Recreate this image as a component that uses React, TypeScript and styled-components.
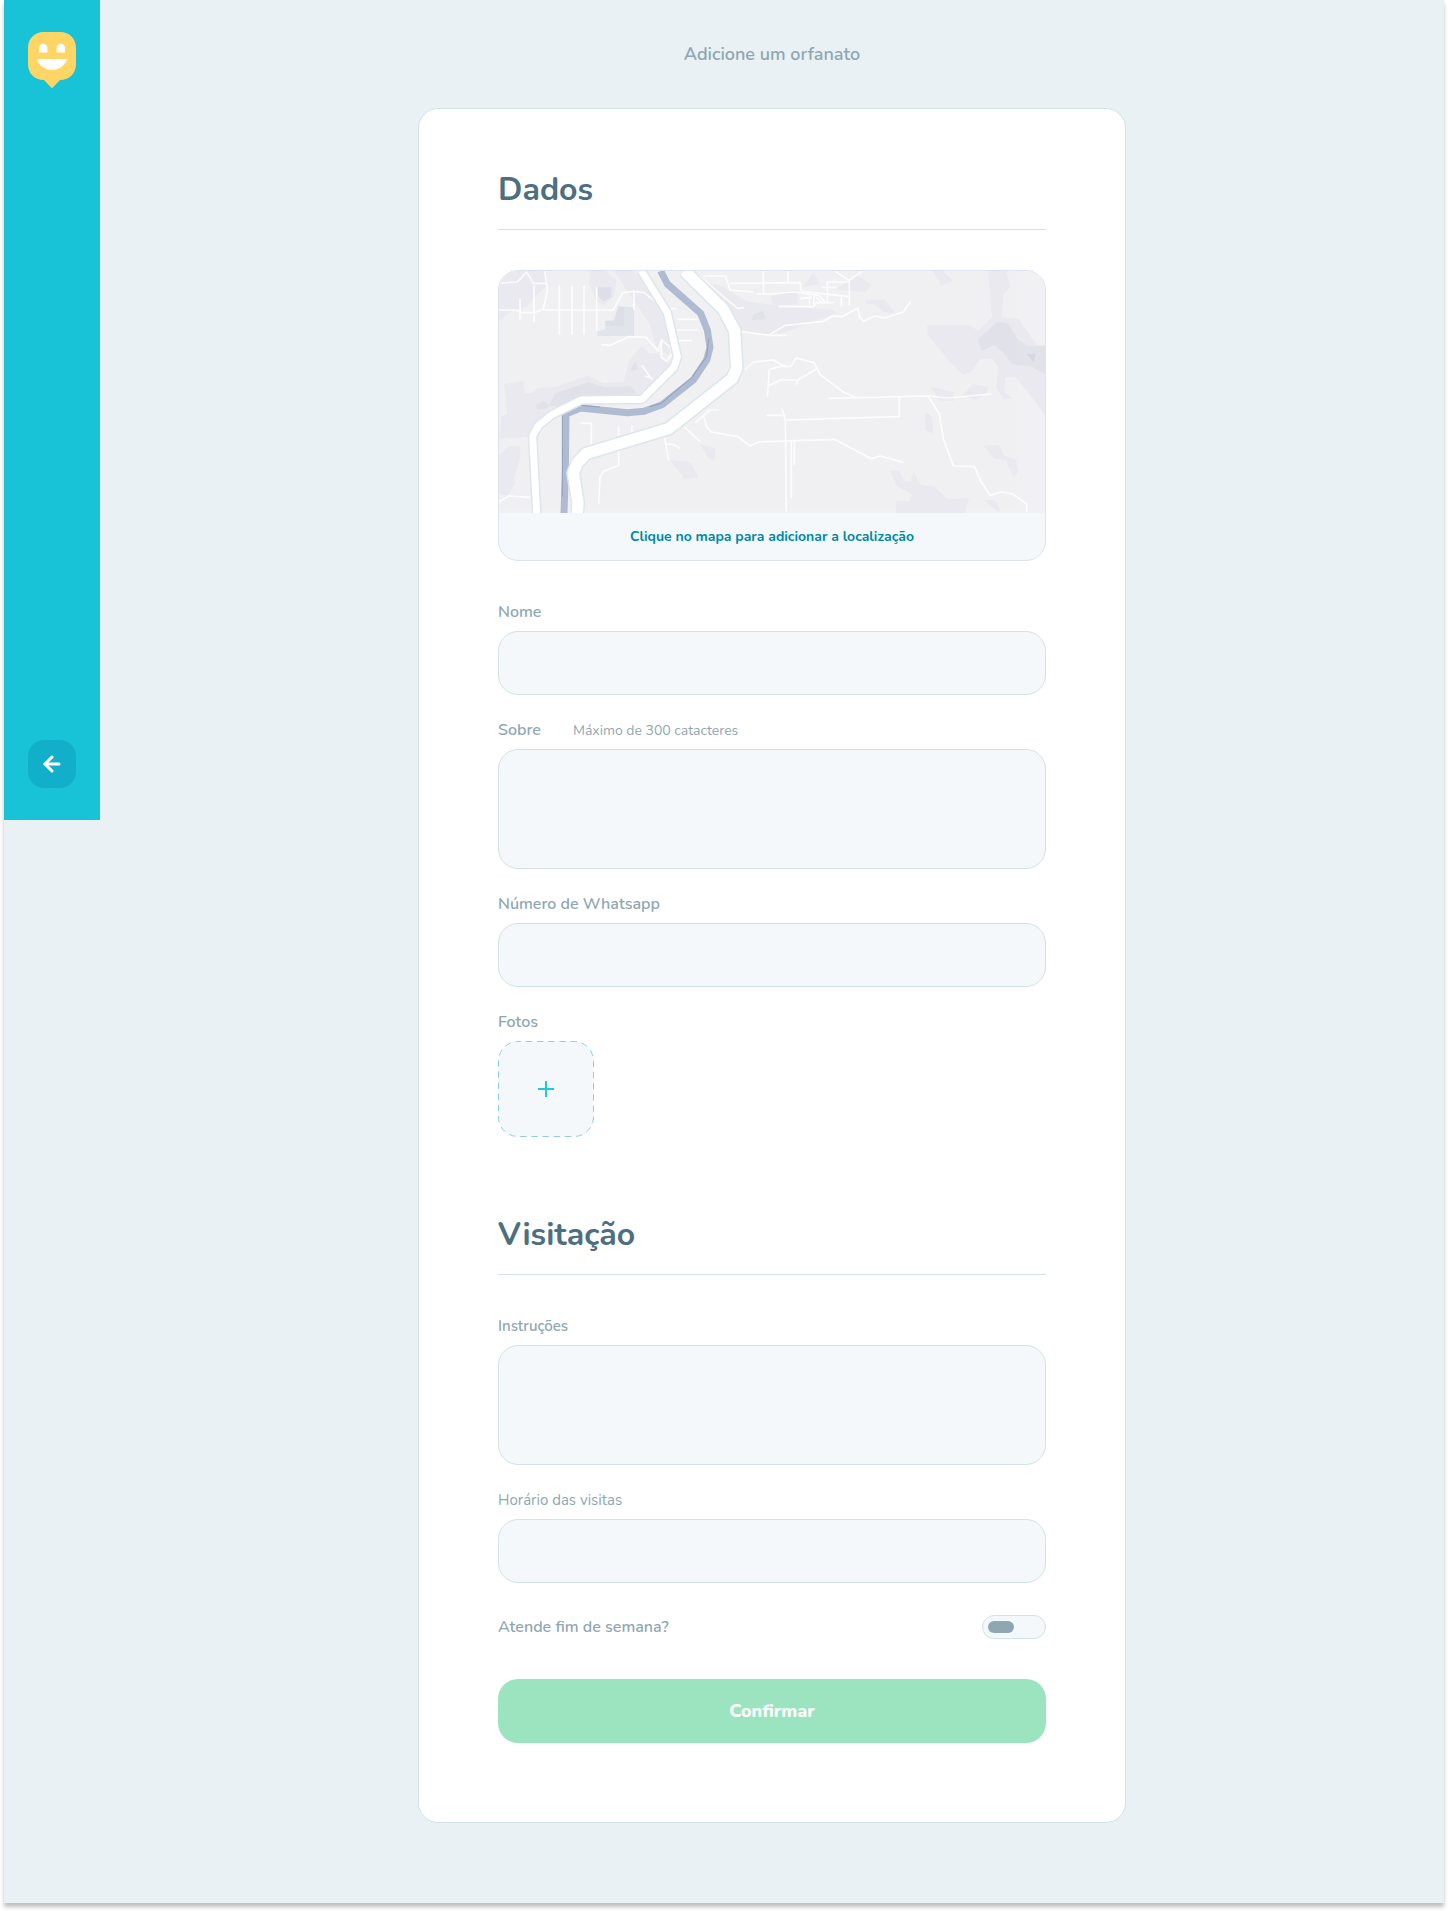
import React, { useState } from "react";
import styled, { createGlobalStyle, css } from "styled-components";
import { FiArrowLeft } from "react-icons/fi";

const color = {
  page: "#e9f1f4",
  card: "#ffffff",
  line: "#d3e2e5",
  field: "#f4f8fb",
  label: "#8fa7b3",
  title: "#4d6f80",
  brand: "#19c3d7",
  brandDark: "#12afcb",
  accent: "#ffd666",
  link: "#0089a5",
  mapLine: "#dde3f0",
  confirm: "#9be4bf",
};

const GlobalStyle = createGlobalStyle`
  *, *::before, *::after {
    box-sizing: border-box;
  }

  body {
    margin: 0;
    background: #ffffff;
    color: ${color.label};
    font-family: Nunito, Lato, "Open Sans", sans-serif;
  }

  button, input, textarea {
    font: inherit;
  }
`;

const Frame = styled.div`
  display: flex;
  align-items: flex-start;
  margin: 0 4px 8px;
  background: ${color.page};
  box-shadow: 0 4px 4px rgba(0, 0, 0, 0.25);
`;

const Sidebar = styled.aside`
  flex: none;
  display: flex;
  flex-direction: column;
  align-items: center;
  justify-content: space-between;
  width: 96px;
  height: 820px;
  padding: 32px 0;
  background: ${color.brand};
`;

const Logo = styled.svg`
  display: block;
  width: 48px;
  height: 56px;
`;

const BackButton = styled.button`
  display: flex;
  align-items: center;
  justify-content: center;
  width: 48px;
  height: 48px;
  padding: 0;
  border: 0;
  border-radius: 16px;
  background: ${color.brandDark};
  color: #ffffff;
  cursor: pointer;
`;

const Main = styled.main`
  flex: 1;
  display: flex;
  flex-direction: column;
  align-items: center;
  gap: 42px;
  padding: 42px 24px 80px;
`;

const PageTitle = styled.h1`
  margin: 0;
  font-size: 18px;
  font-weight: 600;
  line-height: 24px;
`;

const Card = styled.form`
  display: flex;
  flex-direction: column;
  gap: 80px;
  width: 100%;
  max-width: 708px;
  padding: 63px 79px 79px;
  border: 1px solid ${color.line};
  border-radius: 20px;
  background: ${color.card};
`;

const Section = styled.section`
  display: flex;
  flex-direction: column;
  gap: 24px;
`;

const SectionTitle = styled.h2`
  margin: 0 0 16px;
  padding-bottom: 21px;
  border-bottom: 1px solid ${color.line};
  color: ${color.title};
  font-size: 32px;
  font-weight: 700;
  line-height: 36px;
`;

const MapPicker = styled.button`
  display: block;
  width: 100%;
  margin-bottom: 16px;
  padding: 0;
  overflow: hidden;
  border: 1px solid ${color.mapLine};
  border-radius: 20px;
  background: ${color.field};
  cursor: pointer;
`;

const MapDrawing = styled.svg`
  display: block;
  width: 100%;
  height: 242px;
`;

const MapCaption = styled.span`
  display: block;
  padding: 13px 16px 12px;
  color: ${color.link};
  font-size: 14px;
  font-weight: 700;
  line-height: 22px;
  text-align: center;
`;

const Field = styled.div`
  display: flex;
  flex-direction: column;
  align-items: flex-start;
  gap: 8px;
`;

const LabelRow = styled.div`
  display: flex;
  align-items: baseline;
  gap: 32px;
  height: 22px;
`;

const Label = styled.label<{ $small?: boolean; $light?: boolean }>`
  font-size: ${(p) => (p.$small ? "15px" : "16px")};
  font-weight: ${(p) => (p.$light ? 400 : 600)};
  line-height: 22px;
`;

const Hint = styled.span`
  font-size: 14px;
  line-height: 22px;
`;

const control = css`
  display: block;
  width: 100%;
  border: 1px solid ${color.line};
  border-radius: 20px;
  background: ${color.field};
  color: ${color.title};
  font-size: 16px;
  outline-color: ${color.brand};
`;

const TextInput = styled.input`
  ${control}
  height: 64px;
  padding: 0 24px;
`;

const TextArea = styled.textarea`
  ${control}
  height: 120px;
  padding: 16px 24px;
  resize: none;
`;

const AddPhoto = styled.button`
  display: block;
  padding: 0;
  border: 0;
  border-radius: 20px;
  background: none;
  cursor: pointer;
`;

const AddPhotoDrawing = styled.svg`
  display: block;
  width: 96px;
  height: 96px;
`;

const ToggleRow = styled.div`
  display: flex;
  align-items: center;
  justify-content: space-between;
  margin: 8px 0 16px;
`;

const Toggle = styled.input`
  appearance: none;
  display: flex;
  align-items: center;
  width: 64px;
  height: 24px;
  margin: 0;
  padding: 0 5px;
  border: 1px solid ${color.line};
  border-radius: 12px;
  background: ${color.field};
  cursor: pointer;

  &::before {
    content: "";
    width: 26px;
    height: 12px;
    border-radius: 6px;
    background: ${color.label};
  }

  &:checked {
    justify-content: flex-end;
  }
`;

const ConfirmButton = styled.button`
  height: 64px;
  border: 0;
  border-radius: 20px;
  background: ${color.confirm};
  color: #ffffff;
  font-size: 18px;
  font-weight: 800;
  cursor: pointer;
`;

function HappyLogo() {
  return (
    <Logo viewBox="0 0 48 56" role="img" aria-label="Happy">
      <path
        fill={color.accent}
        d="M16 0h16c9.500 0 16 6.500 16 16v16c0 9.500-6.500 16-16 16l-7.200 7.600a1.100 1.100 0 0 1-1.600 0L16 48C6.500 48 0 41.500 0 32V16C0 6.500 6.500 0 16 0z"
      />
      <path
        fill="#ffffff"
        d="M11 20.500V16a4.200 4.200 0 0 1 8.400 0v4.500zM28.600 20.500V16a4.200 4.200 0 0 1 8.400 0v4.500zM10.200 27h27.600c1 0 1.400.7 1 1.500C36.200 34.200 30.800 37.800 24 37.800S11.800 34.200 9.200 28.500c-.4-.8 0-1.500 1-1.500z"
      />
    </Logo>
  );
}

const woods = [
  "M27 33H165L172 76L128 118L112 140L80 150L27 152Z",
  "M27 152H66L27 184Z",
  "M300 33H345L380 60L372 108L342 136L318 122L296 70Z",
  "M372 33H430L470 66L520 160L545 250L535 285L500 262L478 190L430 120Z",
  "M42 372L100 364L104 400L130 398L142 384L196 382L294 346L340 370L400 366L420 296L456 258L482 282L498 278L560 330L470 400L440 428L270 420L180 450L130 530L27 536L34 470L52 462Z",
  "M60 558L92 560L90 596L72 652L76 668L52 708L27 700V584Z",
  "M540 600L600 606L626 652L584 658Z",
  "M630 552L676 566L674 604L654 594Z",
  "M640 66L700 80L770 124L840 134L1030 150L1042 158L880 218L838 224L752 214L736 170Z",
  "M840 110L920 90L924 134L850 134Z",
  "M935 82L972 38L990 72Z",
  "M1036 88L1100 46L1146 74L1126 96L1080 92Z",
  "M1128 120L1184 118L1216 160L1180 156L1156 134L1128 132Z",
  "M1328 33H1360L1390 62L1354 78Z",
  "M1494 33H1550L1560 80L1540 106L1536 172L1586 176L1640 256H1668V470L1620 404L1574 350L1546 352L1542 394L1568 416L1542 418L1518 384L1524 322L1508 296H1470L1444 336L1420 344L1388 316L1312 222V196H1440L1464 212L1506 172Z",
  "M1324 380L1392 396L1390 424L1348 422Z",
  "M1416 406L1448 372L1496 380L1488 402L1456 420Z",
  "M1305 456L1326 470L1330 520L1306 512Z",
  "M1480 556H1526L1542 586L1578 600L1584 634L1572 652L1558 626L1548 600L1512 596Z",
  "M1200 632H1226L1244 662L1262 664L1270 632L1292 674L1334 680L1374 718L1438 714L1424 759H1218V722L1256 724L1268 704L1220 678Z",
  "M1480 720H1512L1530 746L1526 757Z",
];

const denseWoods = [
  "M196 400L294 366L344 382L420 378L440 400L300 414L200 440L178 436Z",
  "M138 434L160 424L182 436L166 446L142 450Z",
  "M434 304L446 326L420 334Z",
  "M788 164L820 152L828 178L786 180Z",
  "M1464 238L1500 206L1520 186L1554 190L1582 236L1612 258H1668V344L1620 318L1568 314L1540 278L1512 254L1474 274Z",
];

const streets = [
  "M27 70L82 66L110 36L130 70H172M164 33L172 90L160 148L132 158H94L78 150H27",
  "M90 116V182M132 76V186M208 76V224M246 78V224M282 78V224M320 82V212",
  "M160 150H370L398 98L432 94L462 98L498 126M432 94V150",
  "M334 254L362 256L416 230L468 232L504 272L514 240L542 262L546 282L530 304L514 292V246",
  "M456 316L486 360M464 348L488 356",
  "M540 146H560M562 178H622M560 210H622M566 242H606",
  "M638 48L706 48L720 90L790 96M620 40L700 110L744 146L762 142M820 33V100M720 70L930 68L934 94M894 33V68M800 102H840L912 96L986 106L1010 130",
  "M934 94L1078 110M1008 66H1078M1012 66V130M1078 62V136M958 96V134M974 100L970 132M978 112L1000 130M1034 33L1078 62L1116 33M996 82H1040M1054 108V142M930 116L966 112M866 140H970L978 128H1032",
  "M752 214L836 226L886 196L1000 184L1028 168L1056 170L1104 144L1108 170L1120 184L1154 168L1184 174L1240 156L1262 124",
  "M836 226H890M764 330L790 306L850 300L884 320L904 318L918 294L972 308L990 344L1060 396L1096 412",
  "M832 410L838 328L870 320L886 314M838 376L872 360H924L980 326M924 360L918 374",
  "M1018 415L1314 408L1372 414L1504 402M1228 410V470L886 480",
  "M1314 408L1348 462L1360 536L1390 618L1454 620L1470 660L1500 706L1532 696L1568 702L1610 732V755",
  "M830 466H886M876 446L886 480L889 755M904 542V714M913 542V616",
  "M640 466L650 500L664 516L744 530L780 558L806 546L1034 538L1144 596L1170 588L1240 607",
  "M688 450H660L616 488M582 500L630 544M524 534L536 602M530 552L552 554L570 566",
  "M272 490H304V560M386 500V530M426 496V520M386 570V616L340 634L330 652L326 732",
  "M27 726L56 708L120 712",
];

const river =
  "M512 33L532 72L632 160L652 210L660 262L650 300L610 360L516 434L462 454L412 458L272 444L228 462L226 640L222 759";
const westRoad =
  "M454 33L532 158L562 290L552 322L456 418L274 420L186 464L146 496L128 528L140 759";
const eastRoad =
  "M584 33L700 148L734 212L740 326L726 356L536 506L290 580L262 608L250 640L264 728L262 759";

function RegionMap() {
  return (
    <MapDrawing viewBox="27 33 1638 726" preserveAspectRatio="xMidYMid slice" aria-hidden="true">
      <rect x="27" y="33" width="1638" height="726" fill="#f1f1f3" />
      {woods.map((d) => (
        <path key={d} d={d} fill="#e9e9ef" />
      ))}
      {denseWoods.map((d) => (
        <path key={d} d={d} fill="#e2e2e9" />
      ))}
      <path d="M1610 282H1638L1630 306L1622 296Z" fill="#d6d7e2" />
      <path d="M322 82H364V112L342 124L326 110Z" fill="#dcdfe8" />
      <path d="M386 138L432 142V228H322V214L346 208V182H370Z" fill="#e2e5ec" />
      <path d="M386 138L402 144V198H346V182H372Z" fill="#dddfe8" />
      <g fill="none" stroke="#ffffff" strokeWidth="5" strokeLinejoin="round" opacity="0.8">
        {streets.map((d) => (
          <path key={d} d={d} />
        ))}
      </g>
      <g fill="none" strokeLinejoin="round">
        <path d={river} stroke="#aebbd0" strokeWidth="21" />
        <path
          d="M217 466V710M656 236L650 290L606 352L514 430L480 440M330 441L270 436"
          stroke="#92a0c0"
          strokeWidth="3"
        />
        <path d={westRoad} stroke="#dde6ea" strokeWidth="30" />
        <path d={westRoad} stroke="#ffffff" strokeWidth="21" />
        <path d={eastRoad} stroke="#dde6ea" strokeWidth="43" />
        <path d={eastRoad} stroke="#ffffff" strokeWidth="34" />
      </g>
    </MapDrawing>
  );
}

export default function App() {
  const [weekends, setWeekends] = useState(false);

  return (
    <>
      <GlobalStyle />
      <Frame>
        <Sidebar>
          <HappyLogo />
          <BackButton type="button" aria-label="Voltar">
            <FiArrowLeft size={24} strokeWidth={3} />
          </BackButton>
        </Sidebar>

        <Main>
          <PageTitle>Adicione um orfanato</PageTitle>

          <Card onSubmit={(event) => event.preventDefault()}>
            <Section>
              <SectionTitle>Dados</SectionTitle>

              <MapPicker type="button">
                <RegionMap />
                <MapCaption>Clique no mapa para adicionar a localização</MapCaption>
              </MapPicker>

              <Field>
                <Label htmlFor="name">Nome</Label>
                <TextInput id="name" type="text" />
              </Field>

              <Field>
                <LabelRow>
                  <Label htmlFor="about">Sobre</Label>
                  <Hint id="about-hint">Máximo de 300 catacteres</Hint>
                </LabelRow>
                <TextArea id="about" maxLength={300} aria-describedby="about-hint" />
              </Field>

              <Field>
                <Label htmlFor="whatsapp">Número de Whatsapp</Label>
                <TextInput id="whatsapp" type="tel" />
              </Field>

              <Field>
                <Label htmlFor="photos">Fotos</Label>
                <AddPhoto id="photos" type="button">
                  <AddPhotoDrawing viewBox="0 0 96 96" fill="none" aria-hidden="true">
                    <rect
                      x="0.5"
                      y="0.5"
                      width="95"
                      height="95"
                      rx="19.5"
                      fill={color.field}
                      stroke="#8ccdee"
                      strokeDasharray="6.4 4.78"
                      strokeDashoffset="3.3"
                    />
                    <path d="M48 40v16M40 48h16" stroke="#22c8d9" strokeWidth="2" />
                  </AddPhotoDrawing>
                </AddPhoto>
              </Field>
            </Section>

            <Section>
              <SectionTitle>Visitação</SectionTitle>

              <Field>
                <Label htmlFor="instructions" $small>
                  Instruções
                </Label>
                <TextArea id="instructions" />
              </Field>

              <Field>
                <Label htmlFor="hours" $small $light>
                  Horário das visitas
                </Label>
                <TextInput id="hours" type="text" />
              </Field>

              <ToggleRow>
                <Label htmlFor="weekends">Atende fim de semana?</Label>
                <Toggle
                  id="weekends"
                  type="checkbox"
                  role="switch"
                  checked={weekends}
                  onChange={(event) => setWeekends(event.target.checked)}
                />
              </ToggleRow>

              <ConfirmButton type="submit">Confirmar</ConfirmButton>
            </Section>
          </Card>
        </Main>
      </Frame>
    </>
  );
}
